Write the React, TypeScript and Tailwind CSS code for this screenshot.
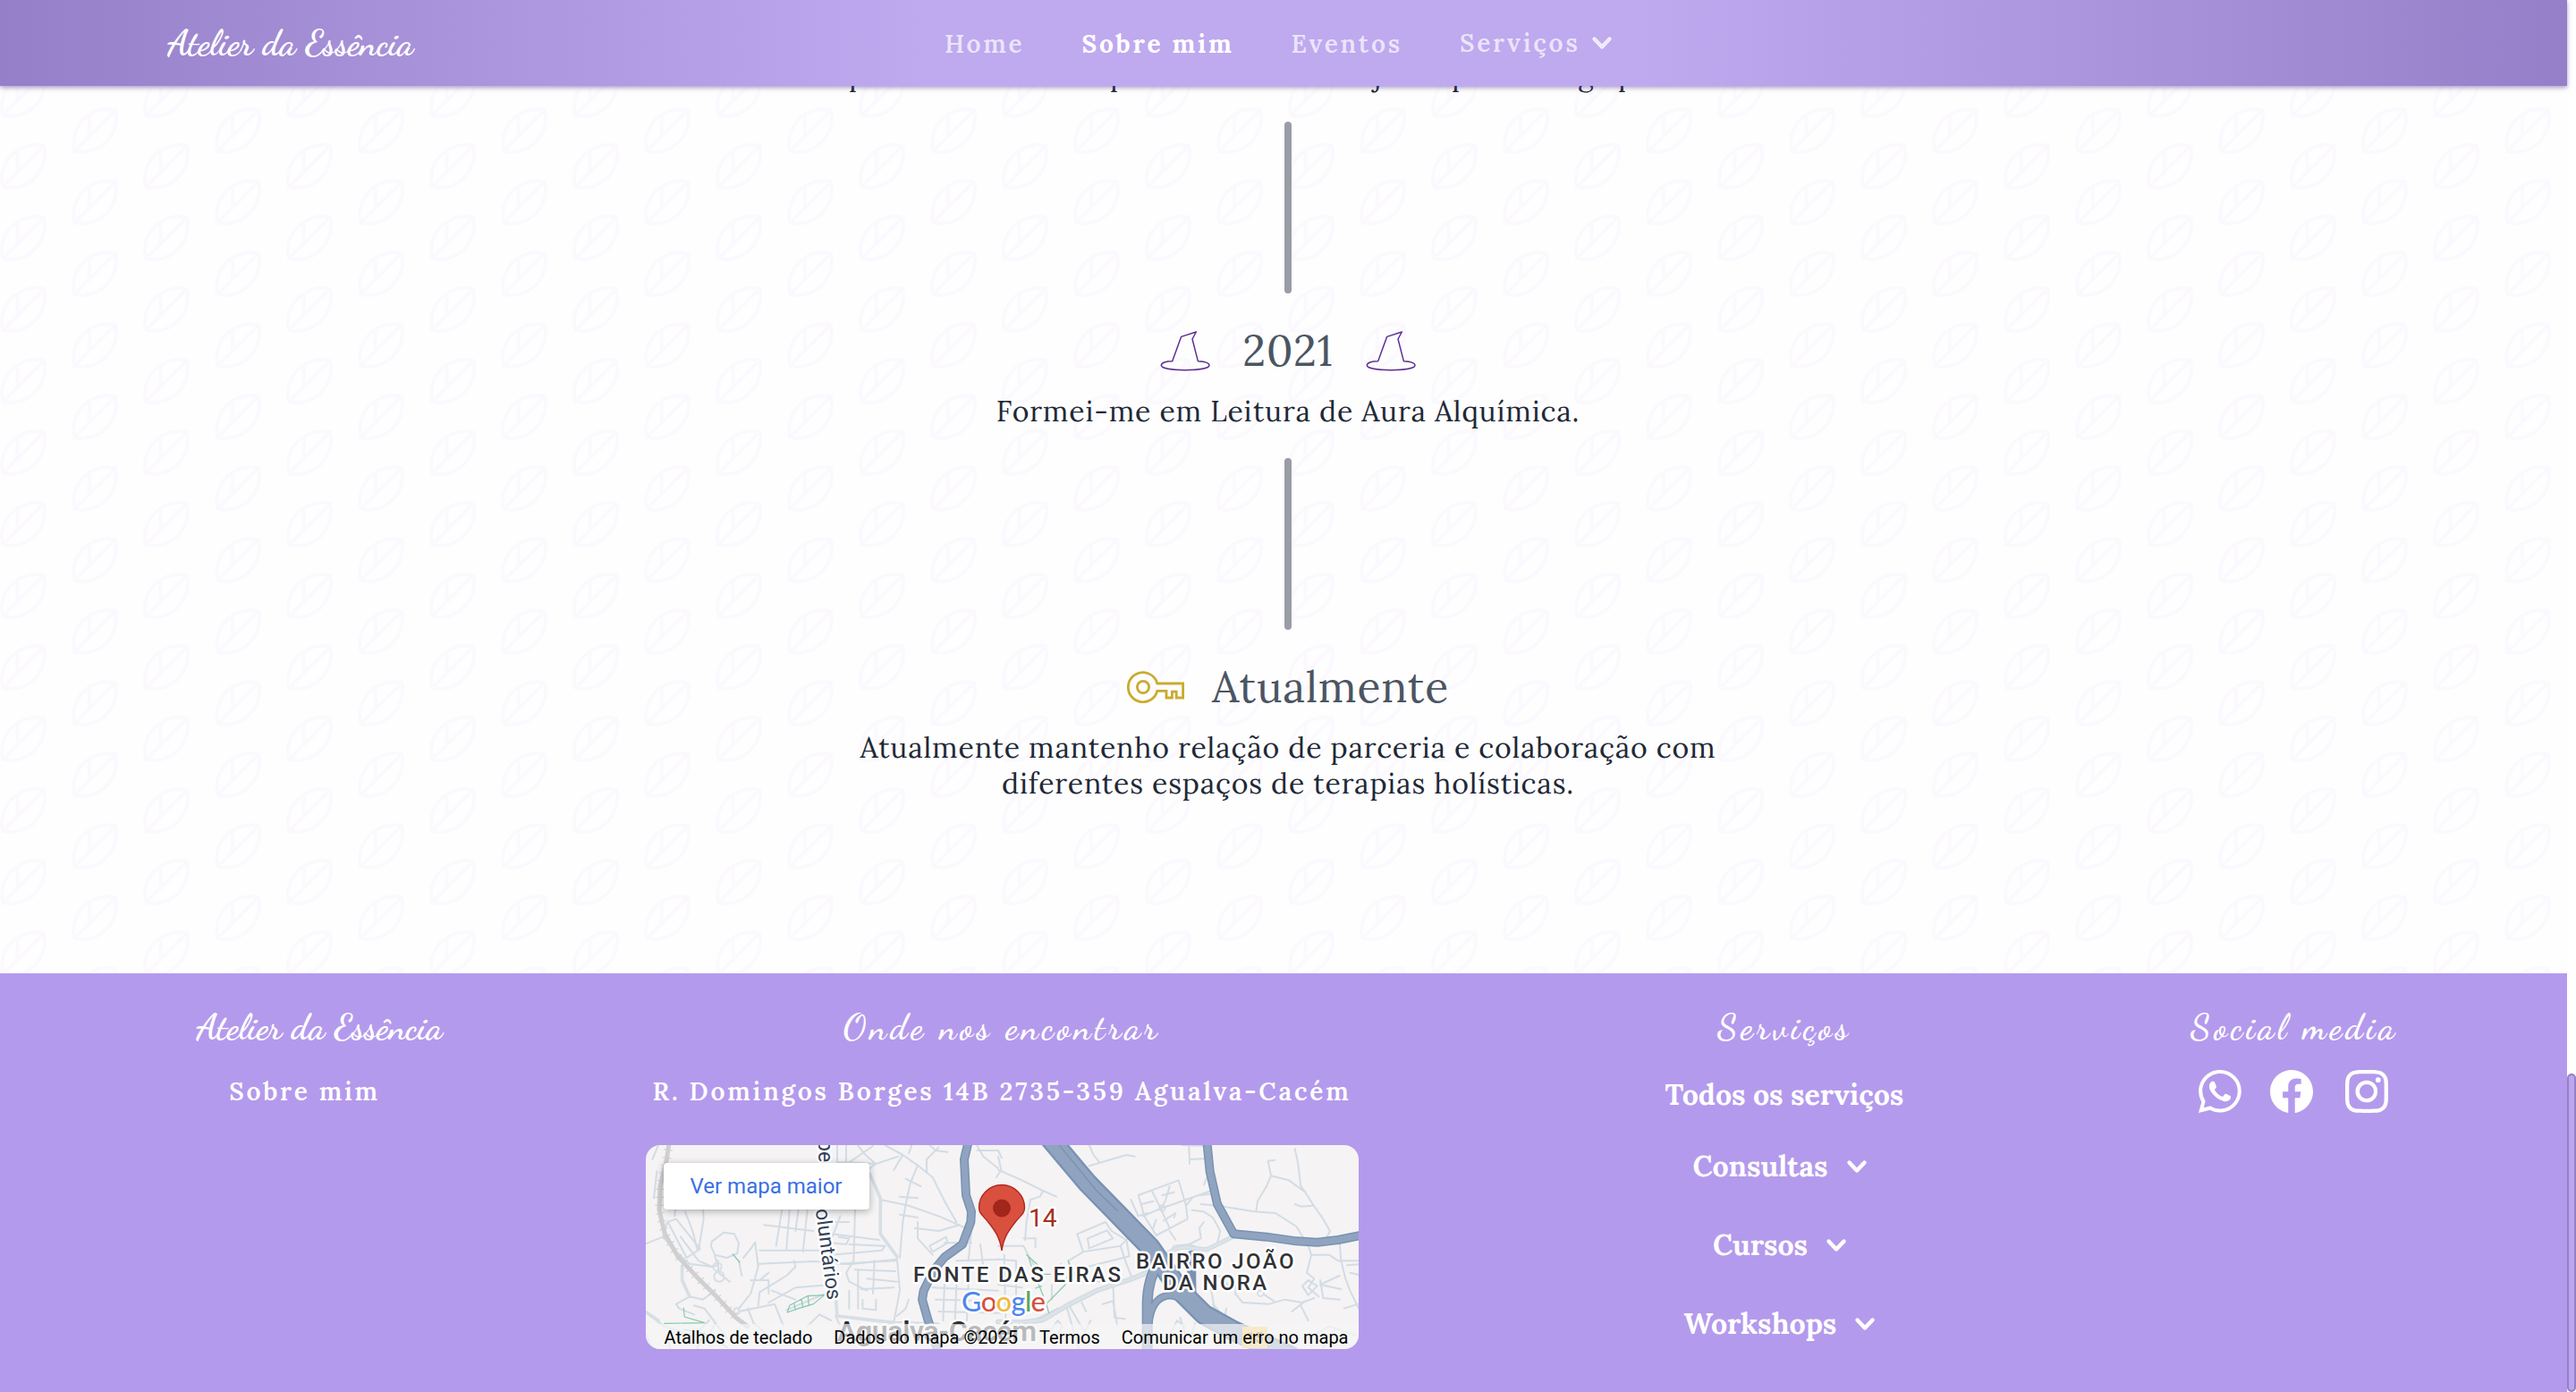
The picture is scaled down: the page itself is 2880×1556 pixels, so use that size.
import React from 'react';
import { BsWhatsapp, BsFacebook, BsInstagram } from 'react-icons/bs';

const LEAF =
  'M0 40a19.96 19.96 0 0 1 5.9-14.11 20.17 20.17 0 0 1 19.44-5.2A20 20 0 0 1 20.2 40H0zM65.32.75A20.02 20.02 0 0 1 40.8 25.26 20.02 20.02 0 0 1 65.32.76zM.07 0h20.1l-.08.07A20.02 20.02 0 0 1 .75 5.25 20.08 20.08 0 0 1 .07 0zm1.94 40h2.53l4.26-4.24v-9.78A17.96 17.96 0 0 0 2 40zm5.38 0h9.8a17.98 17.98 0 0 0 6.67-16.42L7.4 40zm3.43-15.42v9.17l11.62-11.59c-3.97-.5-8.08.3-11.62 2.42zm32.86-.78A18 18 0 0 0 63.85 3.63L43.68 23.8zm7.2-19.17v9.15L62.43 2.22c-3.96-.5-8.05.3-11.57 2.4zm-3.49 2.72c-4.1 4.1-5.81 9.69-5.13 15.03l6.61-6.6V6.02c-.51.41-1 .85-1.48 1.33zM17.18 0H7.42L3.64 3.78A18 18 0 0 0 17.18 0zM2.08 0c-.01.8.04 1.58.14 2.37L4.59 0H2.07z';

function LeafBackdrop() {
  return (
    <svg className="absolute inset-0 h-full w-full" aria-hidden="true">
      <defs>
        <pattern id="leaf" width="80" height="40" patternUnits="userSpaceOnUse" patternTransform="translate(0 40) scale(2)">
          <path d={LEAF} fill="#fbf9fe" fillRule="evenodd" />
        </pattern>
      </defs>
      <rect width="100%" height="100%" fill="url(#leaf)" />
    </svg>
  );
}

function Chevron() {
  return (
    <svg viewBox="0 0 20 20" fill="currentColor" stroke="currentColor" strokeWidth="0.7" className="size-10 shrink-0">
      <path
        fillRule="evenodd"
        clipRule="evenodd"
        d="M5.23 7.21a.75.75 0 011.06.02L10 11.168l3.71-3.938a.75.75 0 111.08 1.04l-4.25 4.5a.75.75 0 01-1.08 0l-4.25-4.5a.75.75 0 01.02-1.06z"
      />
    </svg>
  );
}

function Hat() {
  return (
    <svg viewBox="165 50 180 150" className="h-[50px] w-[60px] shrink-0" fill="none" stroke="#5c2d91" strokeWidth="4.4" strokeLinejoin="round">
      <path d="M212 160 C190 160 175 166 175 174 C175 184 210 190 255 190 C300 190 336 184 336 174 C336 166 322 161 298 160 L279 86 L292 62 L242 78 Z" />
    </svg>
  );
}

function Key() {
  return (
    <svg viewBox="0 0 64 36" className="h-9 w-16 shrink-0" fill="none" stroke="#c9ab2f" strokeWidth="2.8">
      <path d="M33.8 14 H62.6 V30 H55.2 V23.2 H50.4 V30 H44 V22.4 H33.8 A16.5 16.5 0 1 1 33.8 14 Z" />
      <circle cx="18" cy="18" r="6.6" />
    </svg>
  );
}

const Divider = () => <div className="h-48 w-2 rounded-full bg-[#9a9ca6]" />;

const NAV_LINK = 'pt-0.5 font-semibold text-white/70';

function Navbar() {
  return (
    <nav className="relative z-10 flex h-24 shrink-0 items-center bg-[linear-gradient(90deg,#957fc8_0%,#bfa9ef_36%,#bfa9ef_64%,#957fc8_100%)] pl-[187px] shadow-[0_2px_5px_rgba(84,56,150,0.5)]">
      <span className="w-[869px] font-['Dancing_Script'] text-[40px] leading-[48px] font-bold whitespace-nowrap text-white">Atelier da Essência</span>
      <div className="flex items-center gap-16 text-[28px] leading-10 tracking-[0.1em] whitespace-nowrap">
        <span className={NAV_LINK}>Home</span>
        <span className="pt-0.5 font-bold text-white">Sobre mim</span>
        <span className={NAV_LINK}>Eventos</span>
        <span className="flex items-center gap-1 font-semibold text-white/70">
          Serviços
          <Chevron />
        </span>
      </div>
    </nav>
  );
}

function Timeline() {
  return (
    <main className="relative -mt-24 h-[1088px] shrink-0 overflow-hidden bg-[#fefefe] pt-16">
      <LeafBackdrop />
      <div className="relative flex flex-col items-center pl-2.5 text-[32px] leading-10 tracking-[0.8px] text-[#1f2937]">
        <p className="ml-[939px] flex h-10 w-[984px] self-start whitespace-nowrap">
          <span className="w-[292px]">p</span>
          <span className="w-[295px]">p</span>
          <span className="w-[87px]">j</span>
          <span className="w-[141px]">p</span>
          <span className="w-[45px]">g</span>
          <span>p</span>
        </p>
        <div className="mt-8" />
        <Divider />
        <h2 className="mt-10 flex h-12 items-center gap-[34px] text-5xl leading-12 text-[#4b5563]">
          <Hat />
          <span>2021</span>
          <Hat />
        </h2>
        <p className="mt-6 mb-8">Formei-me em Leitura de Aura Alquímica.</p>
        <Divider />
        <h2 className="mt-10 flex h-12 items-center gap-[31px] text-5xl leading-12 text-[#4b5563]">
          <Key />
          <span>Atualmente</span>
        </h2>
        <p className="mt-6 w-[1000px] text-center">
          Atualmente mantenho relação de parceria e colaboração com diferentes espaços de terapias holísticas.
        </p>
      </div>
    </main>
  );
}

/* Local streets, drawn at three times the map's scale. */
const STREETS_WEST = [
  'M0 350 L75 320 L120 370 L165 410 L240 420 L258 415',
  'M75 320 L90 270 L120 260 L200 360 L155 390 L95 275',
  'M135 320 L195 400 L240 420',
  'M150 235 L175 300 L190 360 M210 230 L212 260 L195 365',
  'M240 335 L280 305 L315 310 L330 340 L325 375 L290 390 L250 380 L236 350 Z',
  'M260 400 L262 440 L300 470 M250 385 L260 415',
  'M330 400 L340 450 M345 390 L370 360 L385 338 L395 420 L370 510 L330 560',
  'M400 365 L600 365 M395 410 L580 402 L700 412 L860 395',
  'M415 280 L580 300 M475 228 L455 350 M500 230 L490 360 M530 230 L520 300 M560 230 L545 370',
  'M370 465 L430 465 L430 510 M400 465 L430 440 M395 550 L400 505 L490 450 L520 420 L515 400',
  'M440 500 L520 530 M490 565 L620 510 L640 480 L520 490 L430 540',
  'M330 570 L450 545 L480 620 M360 560 L380 610 L430 650',
  'M140 430 L140 470 L165 520 L210 530 L250 500',
  'M165 520 L120 545 L130 560 L180 580 M180 550 L215 560 L260 620 L290 660',
  'M0 560 L40 590 L80 620 L180 650',
  'M20 650 L40 695 M90 650 L100 695 M190 640 L230 600 M230 650 L250 610',
  'M660 12 L660 70 L700 70 L780 15 M690 12 L690 70',
  'M700 70 L790 75 L865 50 M730 15 L760 50 L790 75 L740 110',
  'M770 110 L805 195 L900 215 L1000 250 L1090 290',
  'M805 195 L805 310 L860 385 L870 500 L850 605',
  'M820 12 L880 45 L930 80 L980 120 L1020 200 L1060 270',
  'M930 80 L905 140 L890 210 L880 270 L870 390 M960 100 L960 60 L1000 20',
  'M880 45 L850 95 M890 125 L940 150 M870 185 L930 190 M870 245 L930 255',
  'M970 12 L990 30 L1030 35 M910 12 L900 40',
  'M970 350 L1025 320 L1030 340 L980 370 Z',
  'M920 290 L1000 300 L1070 280 M930 270 L930 325 L980 380',
  'M640 310 L800 330 M720 230 L715 400 L690 440 L700 470 L760 500',
  'M650 270 L700 270 M665 320 L700 325 L690 345 L640 340 M640 380 L810 365 L820 350 L700 345',
  'M660 410 L855 400 M720 430 L855 435 M785 400 L780 510 M740 495 L850 490 M730 430 L730 560',
  'M700 500 L700 560 M745 530 L745 560 L790 565 L790 530 M760 460 L860 470',
  'M655 520 L660 585 L850 605 L1000 610',
  'M860 585 L890 560 L900 530 M655 585 L680 640 M560 620 L600 580 L640 600',
  'M625 400 L640 330 L670 250',
  'M1020 340 L1110 340 M1110 300 L1100 400 M1140 345 L1150 420 M1060 400 L1210 395',
  'M980 490 L1200 500 M990 530 L1210 535 M1000 570 L1210 575 M1020 480 L1015 600 M1060 480 L1055 600 M1100 480 L1095 600',
  'M1130 15 L1150 50 L1200 90 M1130 30 L1200 30 L1212 55',
  'M60 12 L40 60 M55 100 L45 190 M120 200 L115 250',
];

const STREETS_EAST = [
  'M305 12 L320 45 L340 70 M305 82 L430 45 L458 50',
  'M615 12 L690 15 M640 15 L642 75 M642 60 L690 58',
  'M0 95 L80 130 L150 165 L195 185 M150 165 L140 185 L108 195 L95 270 L90 330 M0 50 L10 95 L-6 120',
  'M0 350 L85 350 L100 380 L130 430 M85 325 L125 325 L125 355',
  'M470 180 L605 130 L630 215 L635 260 L530 315 L490 250 Z',
  'M515 165 L545 225 L575 290 M575 150 L560 200 L545 225 L485 250 M545 225 L630 195 L715 165',
  'M445 195 L470 250 L500 240 M480 210 L520 200 M550 180 L590 170',
  'M555 265 L595 240 L590 255 M530 262 L520 290 M575 300 L595 330',
  'M630 215 L650 190 M650 230 L690 235 L720 255 L745 300 L735 340',
  'M680 180 L720 175 M690 145 L705 110 M680 210 L735 215',
  'M735 215 L860 235 L930 240 L1000 285 L1025 325',
  'M865 235 L870 200 L900 150 L915 115 L905 65 L928 62',
  'M915 115 L975 130 L1030 170 L1055 210 L1090 260 L1113 300 L1100 325',
  'M995 25 L1005 70 L1015 150 L1030 170 M995 210 L1015 218 L1055 215',
  'M265 310 L360 270 L380 300 L430 330 L440 385 L380 400 L300 420 M300 325 L365 298 L385 325 L305 358 Z',
  'M265 310 L285 370 L235 400 L260 450 L340 470 M285 370 L410 350 L440 320 M410 350 L430 410 L450 460',
  'M630 350 L680 325 L675 290 L690 270 M555 400 L590 350 L640 345 L680 360 L735 350',
  'M1040 350 L1050 380 L1035 440 L1060 460 L1040 490 L1075 520 M1050 380 L1110 380 L1140 400 L1224 400',
  'M1145 340 L1150 400 L1165 460 L1180 500 L1224 590',
  'M1020 485 L1040 465 L1070 485 L1040 515 Z M1080 465 L1090 525 L1145 530 M1145 450 L1080 480 L1150 495',
  'M800 470 L795 510 L820 540 L910 545 L960 530 L1020 540 L1060 525',
  'M890 512 L925 535 M1015 550 L1040 600 M985 570 L1030 535',
  'M1170 415 L1224 410 M1180 440 L1224 450 M1160 560 L1224 540',
  'M385 470 L390 590 L425 595 M350 545 L385 535 L400 620',
  'M120 600 L200 560 L230 555 L270 695 M170 640 L200 600 L215 620 L190 660',
  'M235 545 L290 640 L310 600 M280 540 L295 570',
  'M740 450 L770 480 M720 545 L760 590 L765 560 M715 500 L725 560',
  'M580 640 L600 600 L625 620 M610 590 L630 650 M650 650 L660 610',
  'M0 395 L60 400 L60 560 M0 480 L80 490 M0 530 L75 540 M20 380 L25 600',
  'M180 480 L180 530 M210 410 L205 470',
  'M1040 660 L1110 620 L1200 650 M1090 690 L1130 630',
];

const GREENS_WEST = ['M310 378 L333 405', 'M493 573 L500 550 L560 518 L617 515 L580 545 L530 560 Z M520 565 L515 542 M545 556 L540 530 M565 550 L562 518', 'M145 558 L148 588 L215 608 L80 610', 'M145 630 L200 640 L240 655 L290 690 M190 695 L215 640'];
const GREENS_EAST = ['M95 380 L140 420 M100 382 L118 440 L140 490 L160 540 L170 575', 'M235 400 L240 420 L225 480 L158 548 M130 445 L175 445 M125 492 L145 485'];

function CityMap() {
  return (
    <svg viewBox="0 0 797 228" className="absolute inset-0 h-full w-full" fontFamily="Roboto, sans-serif">
      <g transform="translate(-6 -4) scale(0.333333)" fill="none" strokeLinejoin="round" strokeLinecap="round">
        <g stroke="#d3dce4" strokeWidth="6">
          {STREETS_WEST.map((d) => <path key={d} d={d} />)}
        </g>
        <g stroke="#d6dfe5" strokeWidth="11">
          <path d="M770 110 L805 190 L805 310 L860 385 M140 420 L140 465 L165 520 M655 520 L660 585 L850 608 M0 560 L60 600" />
          <circle cx="258" cy="420" r="14" strokeWidth="6" />
          <circle cx="264" cy="453" r="17" strokeWidth="6" />
          <circle cx="323" cy="569" r="10" strokeWidth="6" />
        </g>
        <g stroke="#84c9ab" strokeWidth="3.5">
          {GREENS_WEST.map((d) => <path key={d} d={d} />)}
        </g>
        <path d="M97 0 L88 60 L66 150 L63 230 L82 310 L125 385 L190 455 L255 520 L320 590 L360 620" stroke="#d0d0d2" strokeWidth="15" />
        <path d="M97 0 L88 60 L66 150 L63 230 L82 310 L125 385 L190 455 L255 520 L320 590" stroke="#cfcfd1" strokeWidth="30" strokeDasharray="3 24" strokeLinecap="butt" />
      </g>
      <g transform="translate(394 -4) scale(0.333333)" fill="none" strokeLinejoin="round" strokeLinecap="round">
        <g stroke="#d3dce4" strokeWidth="6">
          {STREETS_EAST.map((d) => <path key={d} d={d} />)}
        </g>
        <circle cx="550" cy="223" r="10" stroke="#d3dce4" strokeWidth="5" />
        <circle cx="880" cy="509" r="10" stroke="#d3dce4" strokeWidth="5" />
        <g stroke="#84c9ab" strokeWidth="3.5">
          {GREENS_EAST.map((d) => <path key={d} d={d} />)}
        </g>
        <path d="M0 605 L80 607 L150 598 L240 545 L330 500 L450 460 L520 430" stroke="#cdd8df" strokeWidth="17" />
        <path d="M0 605 L80 607 L150 598 L240 545 L330 500 L450 460 L520 430" stroke="#dbe3e8" strokeWidth="11" />
        <path d="M560 385 Q600 345 650 358 L700 362 L790 318" stroke="#cfdae1" strokeWidth="15" />
        <path d="M560 385 Q600 345 650 358 L700 362 L790 318" stroke="#dbe3e8" strokeWidth="9" />
        <path d="M700 0 L710 100 L735 210 L790 310 L900 320 L1000 334 L1070 338 L1140 330 L1240 310" stroke="#7892b3" strokeWidth="30" />
        <path d="M700 0 L710 100 L735 210 L790 310 L900 320 L1000 334 L1070 338 L1140 330 L1240 310" stroke="#90a4c0" strokeWidth="21" />
        <path d="M540 400 Q502 460 500 540 L500 710" stroke="#7892b3" strokeWidth="36" />
        <path d="M505 610 Q515 520 575 516 Q620 518 660 575" stroke="#7892b3" strokeWidth="26" />
        <path d="M648 380 L650 560" stroke="#7892b3" strokeWidth="30" />
        <path d="M165 -20 L300 140 L510 355 L610 500 L690 580 L790 635 L980 720" stroke="#7892b3" strokeWidth="70" />
        <path d="M540 400 Q502 460 500 540 L500 710" stroke="#90a4c0" strokeWidth="27" />
        <path d="M505 610 Q515 520 575 516 Q620 518 660 575" stroke="#90a4c0" strokeWidth="17" />
        <path d="M165 -20 L300 140 L510 355 L610 500 L690 580 L790 635 L980 720" stroke="#90a4c0" strokeWidth="56" />
        <path d="M195 0 L330 165 L400 232" stroke="#7892b3" strokeWidth="4" />
      </g>
      <g transform="translate(-6 -4) scale(0.333333)" fill="none" strokeLinejoin="round">
        <path d="M1100 0 L1086 60 L1092 180 L1110 235 L1108 270 L1080 345 L1020 388 L985 430 L950 500 L945 530 L962 590 L1000 710" stroke="#7892b3" strokeWidth="30" />
        <path d="M1100 0 L1086 60 L1092 180 L1110 235 L1108 270 L1080 345 L1020 388 L985 430 L950 500 L945 530 L962 590 L1000 710" stroke="#90a4c0" strokeWidth="21" />
      </g>

      <g stroke="#ffffff" strokeWidth="5" strokeLinejoin="round" paintOrder="stroke">
        <g fill="#33435a" fontSize="23">
          <text transform="translate(193 -6) rotate(90)">be</text>
          <text transform="translate(188 58) rotate(82.5)">Voluntários</text>
        </g>
        <g fill="#303236" fontSize="24" fontWeight="500">
          <text x="299" y="153" letterSpacing="2.4">FONTE DAS EIRAS</text>
          <text x="548" y="138" letterSpacing="2.4">BAIRRO JOÃO</text>
          <text x="578" y="162" letterSpacing="2.4">DA NORA</text>
        </g>
        <text x="214" y="219" fontSize="32" fontWeight="600" fill="#2c2e33" textLength="223">Agualva-Cacém</text>
        <text x="428" y="91" fontSize="28" fill="#a82c22">14</text>
        <text x="353" y="186" fontSize="31" fontWeight="500" textLength="94" fontFamily="Lato, sans-serif">
          <tspan fill="#4f86ee">G</tspan>
          <tspan fill="#d9503f">o</tspan>
          <tspan fill="#efb93a">o</tspan>
          <tspan fill="#4f86ee">g</tspan>
          <tspan fill="#57a65c">l</tspan>
          <tspan fill="#d9503f">e</tspan>
        </text>
      </g>
      <path d="M398 118 C396 103 390 95 382 85 C376 78 372.500 76 372.500 70 A25.500 25.500 0 0 1 423.500 70 C423.500 76 420 78 414 85 C406 95 400 103 398 118 Z" fill="#d9503f" stroke="#b3281e" strokeWidth="1.400" />
      <circle cx="398" cy="70.500" r="10" fill="#a3261c" />
      <rect x="667" y="203" width="28" height="24" fill="#f7d06a" />
      <text x="681" y="221" fontSize="17" fontWeight="500" textAnchor="middle" fill="#8a7a45">15</text>
    </svg>
  );
}

function MapCard() {
  return (
    <div className="relative mt-10 flex h-[228px] w-[797px] flex-col items-start justify-between overflow-hidden rounded-2xl bg-[#f5f3f4] font-['Roboto']">
      <CityMap />
      <a className="relative mt-5 ml-5 flex h-[52px] w-[230px] items-center justify-center rounded-[4px] bg-white text-2xl text-[#3a70e2] shadow-[0_2px_8px_rgba(0,0,0,0.3)]">
        Ver mapa maior
      </a>
      <div className="relative flex h-7 w-full items-center justify-end gap-6 bg-[#f5f5f5]/70 pt-px pr-[11px] text-xl leading-7 whitespace-nowrap text-black">
        <span>Atalhos de teclado</span>
        <span>Dados do mapa ©2025</span>
        <span>Termos</span>
        <span>Comunicar um erro no mapa</span>
      </div>
    </div>
  );
}

const FOOTER_HEADING = "font-['Dancing_Script'] text-[40px] leading-[56px] font-semibold tracking-[0.1em]";

function Footer() {
  return (
    <footer className="flex h-[468px] shrink-0 bg-[#b49aec] pt-8 whitespace-nowrap text-white">
      <div className="flex w-[714px] flex-col items-center">
        <span className="font-['Dancing_Script'] text-[40px] leading-[56px] font-bold">Atelier da Essência</span>
        <a className="mt-6 mr-[33px] text-[28px] leading-10 font-semibold tracking-[0.1em]">Sobre mim</a>
      </div>
      <div className="flex w-[812px] flex-col items-center">
        <h3 className={FOOTER_HEADING}>Onde nos encontrar</h3>
        <p className="mt-6 text-[28px] leading-10 font-semibold tracking-[0.1em]">R. Domingos Borges 14B 2735-359 Agualva-Cacém</p>
        <MapCard />
      </div>
      <div className="ml-[200px] flex w-[538px] flex-col items-center text-[32px] leading-10 font-bold">
        <h3 className={FOOTER_HEADING}>Serviços</h3>
        <a className="mt-7">Todos os serviços</a>
        <div className="mt-10 mr-0.5 flex flex-col items-center gap-12">
          <a className="flex items-center gap-3">Consultas<Chevron /></a>
          <a className="flex items-center gap-3">Cursos<Chevron /></a>
          <a className="flex items-center gap-3">Workshops<Chevron /></a>
        </div>
      </div>
      <div className="flex w-[602px] flex-col items-center">
        <h3 className={FOOTER_HEADING}>Social media</h3>
        <div className="mt-5 mr-0.5 flex gap-8">
          <BsWhatsapp className="size-12" />
          <BsFacebook className="size-12" />
          <BsInstagram className="ml-1 size-12" />
        </div>
      </div>
    </footer>
  );
}

export default function App() {
  return (
    <div className="flex h-[1556px] w-[2880px] overflow-hidden bg-white font-['Lora',serif]">
      <div className="flex w-[2870px] shrink-0 flex-col">
        <Navbar />
        <Timeline />
        <Footer />
      </div>
      <div className="flex w-2.5 flex-col justify-end">
        <div className="h-[356px] rounded-full border-2 border-[#957fc8] bg-[#bca6ec]" />
      </div>
    </div>
  );
}
